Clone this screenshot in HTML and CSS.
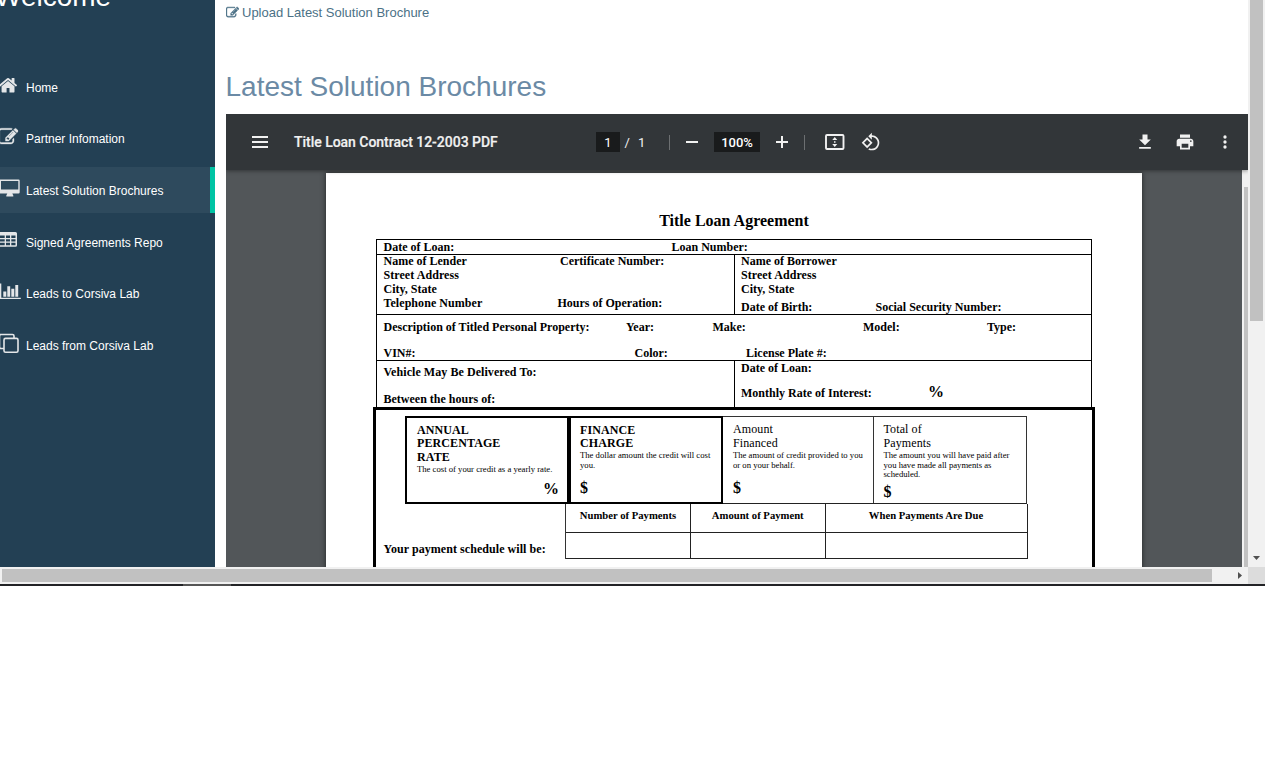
FILE: index.html
```html
<!DOCTYPE html>
<html lang="en">
<head>
<meta charset="utf-8">
<title>Latest Solution Brochures</title>
<link rel="stylesheet" href="styles.css">
</head>
<body>
<svg class="defs" aria-hidden="true">
  <symbol id="edit" viewBox="0 0 1792 1792"><path d="M888 1184l116-116-152-152-116 116v56h96v96h56zm440-720q-16-16-33 1l-350 350q-17 17-1 33t33-1l350-350q17-17 1-33zm80 594v190q0 119-84.5 203.5t-203.5 84.5h-832q-119 0-203.5-84.5t-84.5-203.5v-832q0-119 84.5-203.5t203.5-84.5h832q63 0 117 25 15 7 18 23 3 17-9 29l-49 49q-14 14-32 8-23-6-45-6h-832q-66 0-113 47t-47 113v832q0 66 47 113t113 47h832q66 0 113-47t47-113v-126q0-13 9-22l64-64q15-15 35-7t20 29zm-96-738l288 288-672 672h-288v-288zm444 132l-92 92-288-288 92-92q28-28 68-28t68 28l152 152q28 28 28 68t-28 68z"/></symbol>
</svg>
<div class="window">
  <div class="view">
    <nav class="sidebar">
      <div class="welcome">Welcome</div>
      <a class="item"><svg class="ico" viewBox="0 0 22 22"><path transform="translate(-2 .2) scale(.0112)" d="M1472 992v480q0 26-19 45t-45 19h-384v-384h-256v384h-384q-26 0-45-19t-19-45v-480q0-1 .5-3t.5-3l575-474 575 474q1 2 1 6zm223-69l-62 74q-8 9-21 11h-3q-13 0-21-7l-692-577-692 577q-12 8-24 7-13-2-21-11l-62-74q-8-10-7-23.5t11-21.5l719-599q32-26 76-26t76 26l244 204v-195q0-14 9-23t23-9h192q14 0 23 9t9 23v408l219 182q10 8 11 21.5t-7 23.5z"/></svg><span>Home</span></a>
      <a class="item"><svg class="ico" viewBox="0 0 22 22"><use href="#edit" x="-1.7" y=".8" width="20" height="20" stroke="currentColor" stroke-width="30"/></svg><span>Partner Infomation</span></a>
      <a class="item active"><svg class="ico" viewBox="0 0 22 22"><path fill-rule="evenodd" d="M0 1.500h18.500q1.200 0 1.200 1.200v11.500q0 1.200-1.200 1.200h-6.200l1 2v1H6.300v-1l1-2H0zM1 3v8.500h17.300V3z"/></svg><span>Latest Solution Brochures</span></a>
      <a class="item"><svg class="ico" viewBox="0 0 22 22"><path fill-rule="evenodd" d="M0 2h15.500q1.500 0 1.500 1.500v11.800q0 1.500-1.500 1.500H0zM0 5.600v2.400h4.700V5.600zm6 0v2.400h4V5.600zm5.300 0v2.400h4.200V5.600zM0 9.300v2.200h4.700V9.300zm6 0v2.200h4V9.300zm5.300 0v2.200h4.200V9.300zM0 12.800v2.500h4.700v-2.500zm6 0v2.500h4v-2.500zm5.300 0v2.500h4.200v-2.500z"/></svg><span>Signed Agreements Repo</span></a>
      <a class="item"><svg class="ico" viewBox="0 0 22 22"><path d="M0 2.500h1.300v14.200h19.500V18H0zM3.300 10.500h3v5.200h-3zM7.300 5.300h2.900v10.400H7.300zM11.300 7.800h3v7.900h-3zM15.300 4h2.900v11.700h-2.900z"/></svg><span>Leads to Corsiva Lab</span></a>
      <a class="item"><svg class="ico" viewBox="0 0 22 22"><g fill="none" stroke="currentColor" stroke-width="1.600"><rect x="4" y="5.400" width="14" height="13.800" rx="1.500"/><path d="M4 15.500H1q-1.500 0-1.500-1.500V3q0-1.500 1.500-1.500h11.500Q14 1.500 14 3v2.400"/></g></svg><span>Leads from Corsiva Lab</span></a>
    </nav>
    <main class="content">
      <a class="upload"><svg class="up" viewBox="0 0 1792 1792"><use href="#edit" stroke="currentColor" stroke-width="50"/></svg><span>Upload Latest Solution Brochure</span></a>
      <h1>Latest Solution Brochures</h1>
      <section class="viewer">
        <header class="toolbar">
          <svg class="menu" viewBox="0 0 16 12"><path d="M0 0h16v2H0zM0 5h16v2H0zM0 10h16v2H0z"/></svg>
          <span class="file">Title Loan Contract 12-2003 PDF</span>
          <div class="pager"><span class="box pagebox">1</span><span class="slash">/</span><span>1</span></div>
          <i class="sep"></i>
          <svg class="minus" viewBox="0 0 12 12"><path d="M0 5h12v2H0z"/></svg>
          <span class="box zoombox">100%</span>
          <svg class="plus" viewBox="0 0 12 12"><path d="M0 5h5V0h2v5h5v2H7v5H5V7H0z"/></svg>
          <i class="sep"></i>
          <svg class="fit" viewBox="0 0 20 16"><rect x="1" y="1" width="17.500" height="14" rx="1" fill="none" stroke="#f1f1f1" stroke-width="1.900"/><path d="M9.750 3l2.500 3h-5zM9.750 13l2.500-3h-5zM9 7.200h1.500v1.500H9z"/></svg>
          <svg class="tool rotate" viewBox="0 0 24 24"><path d="M7.340 6.410L.86 12.900l6.490 6.480 6.490-6.480-6.500-6.490zM3.690 12.900l3.660-3.660L11 12.900l-3.660 3.660-3.650-3.660zm15.670-6.260C17.610 4.880 15.300 4 13 4V.76L8.760 5 13 9.240V6c1.790 0 3.580.68 4.950 2.050 2.730 2.730 2.730 7.170 0 9.900C16.580 19.320 14.790 20 13 20c-.97 0-1.940-.21-2.840-.61l-1.490 1.490C10.020 21.620 11.510 22 13 22c2.300 0 4.610-.88 6.360-2.640 3.520-3.510 3.520-9.210 0-12.720z"/></svg>
          <div class="actions">
            <svg class="tool" viewBox="0 0 24 24"><path d="M19 9h-4V3H9v6H5l7 7 7-7zM5 18v2h14v-2H5z"/></svg>
            <svg class="tool" viewBox="0 0 24 24"><path d="M19 8H5c-1.660 0-3 1.340-3 3v6h4v4h12v-4h4v-6c0-1.660-1.340-3-3-3zm-3 11H8v-5h8v5zm3-7c-.55 0-1-.45-1-1s.45-1 1-1 1 .45 1 1-.45 1-1 1zm-1-9H6v4h12V3z"/></svg>
            <svg class="tool" viewBox="0 0 24 24"><circle cx="12" cy="6" r="2"/><circle cx="12" cy="12" r="2"/><circle cx="12" cy="18" r="2"/></svg>
          </div>
        </header>
        <div class="stage">
          <article class="page">
            <h2>Title Loan Agreement</h2>
            <div class="form">
              <div class="row loan"><p class="line"><span>Date of Loan:</span><span>Loan Number:</span></p></div>
              <div class="row parties">
                <div class="cell lender">
                  <p class="line"><span>Name of Lender</span><span>Certificate Number:</span></p>
                  <p class="line wide">Street Address</p>
                  <p class="line">City, State</p>
                  <p class="line phone"><span class="wide">Telephone Number</span><span>Hours of Operation:</span></p>
                </div>
                <div class="cell right">
                  <p class="line">Name of Borrower</p>
                  <p class="line wide">Street Address</p>
                  <p class="line">City, State</p>
                  <p class="line birth"><span>Date of Birth:</span><span>Social Security Number:</span></p>
                </div>
              </div>
              <div class="row property">
                <p class="line describe"><span>Description of Titled Personal Property:</span><span>Year:</span><span>Make:</span><span>Model:</span><span>Type:</span></p>
                <p class="line vin"><span>VIN#:</span><span>Color:</span><span>License Plate #:</span></p>
              </div>
              <div class="row delivery">
                <div class="cell deliver"><p class="line wide">Vehicle May Be Delivered To:</p><p class="line">Between the hours of:</p></div>
                <div class="cell right"><p class="line">Date of Loan:</p><p class="line rate"><span>Monthly Rate of Interest:</span><b class="big">%</b></p></div>
              </div>
            </div>
            <div class="truth">
              <div class="costs">
                <div class="cost strong"><p>ANNUAL<br>PERCENTAGE</p><p class="last">RATE</p><small>The cost of your credit as a yearly rate.</small><b class="big pct">%</b></div>
                <div class="cost strong second"><p>FINANCE<br>CHARGE</p><small>The dollar amount the credit will cost<br>you.</small><b class="big">$</b></div>
                <div class="cost light"><p>Amount<br>Financed</p><small>The amount of credit provided to you<br>or on your behalf.</small><b class="big">$</b></div>
                <div class="cost light total"><p>Total of<br>Payments</p><small>The amount you will have paid after<br>you have made all payments as<br>scheduled.</small><b class="big">$</b></div>
              </div>
              <div class="schedule">
                <p class="line wide">Your payment schedule will be:</p>
                <div class="pay"><div>Number of Payments</div><div>Amount of Payment</div><div>When Payments Are Due</div><div></div><div></div><div></div></div>
              </div>
            </div>
          </article>
          <div class="pdfbar"><i></i></div>
        </div>
      </section>
    </main>
    <div class="vbar"><i class="thumb"></i><svg viewBox="0 0 7 4"><path d="M0 0h7L3.500 4z"/></svg></div>
  </div>
  <div class="hbar"><div class="track"><i class="thumb"></i><svg viewBox="0 0 4 7"><path d="M0 0v7l4-3.500z"/></svg></div><i class="corner"></i></div>
  <div class="edge"><i></i></div>
</div>
</body>
</html>
```
FILE: styles.css
```css
* { box-sizing: border-box; }
body { margin: 0; background: #fff; font-family: "Liberation Sans", Arial, sans-serif; overflow: hidden; }
p, h1, h2 { margin: 0; }
svg { display: block; fill: currentColor; flex: none; }
.defs { display: none; }
.window { width: 1265px; height: 586px; overflow: hidden; }
.view { display: flex; height: 567px; overflow: hidden; }

/* navigation */
.sidebar { width: 215px; flex: none; background: #234054; color: #e8e8e8; overflow: hidden; }
.welcome { height: 64px; font-size: 28px; line-height: 30px; margin-top: -18px; margin-bottom: 18px; margin-left: -5px; color: #fff; }
.item { display: flex; align-items: center; height: 46px; margin-bottom: 5.7px; font-size: 12px; color: #fff; }
.item .ico { width: 22px; height: 22px; margin: -3px 4px 0 0; color: #e4e6e8; }
.item span { padding-top: 1px; }
.active { background: #2e4a5d; border-right: 5px solid #00c4a4; }

/* content */
.content { width: 1033px; flex: none; padding-left: 11px; overflow: hidden; }
.upload { display: flex; align-items: center; gap: 3px; height: 25px; font-size: 13px; color: #4b7186; }
.up { width: 13px; height: 13px; }
h1 { font-size: 28px; line-height: 34px; font-weight: 400; color: #6b8aa5; margin: 45px 0 10px -.5px; }

/* document viewer */
.viewer { overflow: hidden; }
.toolbar { display: flex; align-items: center; height: 56px; padding: 0 13px 0 26px; background: #323639; color: #f1f1f1; font: 500 14px Roboto, sans-serif; position: relative; z-index: 2; box-shadow: 0 1px 4px rgba(0,0,0,.4); }
.menu { width: 16px; height: 12px; }
.file { width: 302px; margin-left: 26px; white-space: nowrap; letter-spacing: -.03px; -webkit-text-stroke: .2px currentColor; }
.pager { display: flex; align-items: center; width: 73px; font-size: 13px; font-weight: 400; }
.box { display: grid; place-items: center; height: 20px; background: #191b1c; color: #fff; font-size: 13px; }
.pagebox { width: 24px; }
.slash { margin: 0 8px 0 4.5px; }
.sep { width: 1px; height: 15px; background: #6c6f71; }
.minus { width: 12px; height: 12px; margin: 0 16px; }
.zoombox { width: 46px; }
.plus { width: 12px; height: 12px; margin: 0 16px; }
.fit { width: 20px; height: 16px; margin: 0 16px 0 20px; }
.tool { width: 20px; height: 20px; }
.actions { display: flex; gap: 20px; margin-left: auto; }
.stage { display: flex; height: 397px; background: #525659; overflow: hidden; }
.pdfbar { width: 6px; margin-left: auto; background: #f1f1f1; padding: 17px 0 0 2px; }
.pdfbar i { display: block; height: 380px; background: #c1c1c1; }

/* loan agreement */
.page { width: 816px; height: 500px; flex: none; margin: 3px 0 0 100px; padding: 38px 47px 0; background: #fff; color: #000; font: 700 12px/14px "Liberation Serif", "Times New Roman", serif; box-shadow: 0 0 5px rgba(0,0,0,.6); }
.page h2 { font-size: 16px; line-height: 20px; height: 28px; text-align: center; }
.line { white-space: nowrap; height: 14px; display: grid; }
.form { width: 716px; margin-left: 3px; border: 1px solid #000; border-bottom: 0; }
.row + .row { border-top: 1px solid #000; }
.loan { height: 14px; padding-left: 6.500px; }
.loan .line { grid-template-columns: 288px auto; }
.parties { display: flex; height: 60px; }
.parties .cell { margin-top: -1px; }
.cell { width: 357px; padding-left: 6.500px; }
.right { border-left: 1px solid #000; padding-left: 6px; }
.lender .line { grid-template-columns: 176.500px auto; }
.lender .phone { grid-template-columns: 174px auto; }
.birth { margin-top: 4px; grid-template-columns: 134.500px auto; }
.property { height: 46px; padding: 5px 0 0 6.500px; }
.describe { grid-template-columns: 242.500px 86.500px 150.500px 124px auto; }
.vin { margin-top: 12px; grid-template-columns: 251px 111.500px auto; }
.delivery { display: flex; height: 47px; }
.deliver { padding-top: 4px; }
.deliver .line + .line { margin-top: 13px; }
.wide { letter-spacing: .06px; }
.rate { margin-top: 11px; grid-template-columns: 187px auto; }
.big { font-size: 16px; line-height: 18px; font-weight: 700; }
.rate .big { margin-top: -3px; }
.truth { width: 722px; height: 180px; border: 3px solid #000; padding: 6px 0 0 7.500px; }
.costs { display: grid; grid-template-columns: 164px 154px 150px 153.500px; width: 622px; height: 88px; margin-left: 21.500px; border-right: 1px solid #333; border-bottom: 1px solid #222; }
.cost { display: flex; flex-direction: column; padding: 6px 0 0 10px; border-top: 1px solid #333; white-space: nowrap; line-height: 13px; }
.cost p { letter-spacing: .1px; }
.cost small { font-size: 8.660px; line-height: 9.700px; font-weight: 400; }
.strong { border: 2px solid #000; margin-bottom: -1px; padding-left: 10px; padding-top: 6px; }
.strong small { padding-top: 1px; }
.second { padding-left: 9px; }
.last { margin-top: 1px; }
.pct { align-self: flex-end; margin-right: 8px; }
.cost > .big { margin-top: 9px; }
.cost > .pct { margin-top: 5px; }
.light { font-weight: 400; line-height: 14px; padding-top: 5px; }
.light small { padding-top: 1px; }
.total { border-left: 1px solid #333; padding-left: 9.500px; }
.light > .big { margin-top: 9px; }
.total > .big { margin-top: 3px; }
.schedule { display: flex; }
.schedule > .line { width: 181.500px; margin-top: 38px; }
.pay { display: grid; grid-template: 29px 26px / 125px 134.500px 202px; border-left: 1px solid #333; font-size: 10.670px; }
.pay div { display: grid; justify-content: center; align-items: center; padding-bottom: 7px; border-right: 1px solid #222; border-bottom: 1px solid #222; }

/* window scrollbars */
.vbar { width: 17px; flex: none; background: #f1f1f1; padding: 0 2px; display: flex; flex-direction: column; color: #505050; }
.vbar .thumb { height: 321px; background: #c1c1c1; }
.vbar svg { width: 7px; height: 4px; margin: auto 3px 7px; }
.hbar { display: flex; height: 17px; background: #f1f1f1; color: #505050; }
.track { width: 1248px; padding: 0 6px 0 2px; display: flex; align-items: center; justify-content: space-between; }
.track .thumb { width: 1210px; height: 13px; background: #c1c1c1; }
.track svg { width: 4px; height: 7px; }
.corner { width: 17px; background: #dcdcdc; }
.edge { height: 2px; background: #222326; padding-left: 183px; }
.edge i { display: block; width: 48px; height: 2px; background: #555; }
```
